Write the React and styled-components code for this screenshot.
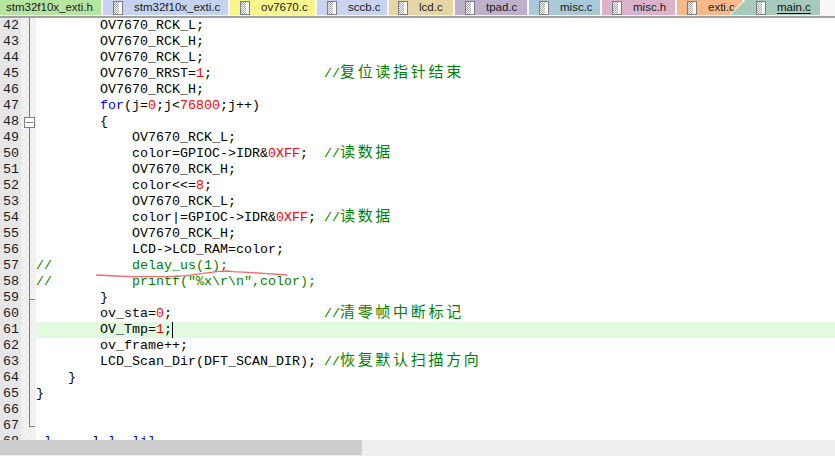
import React, { useId } from 'react';
import styled, { createGlobalStyle } from 'styled-components';

const GlobalStyle = createGlobalStyle`
  html, body {
    margin: 0;
    padding: 0;
    background: #fff;
  }
  body {
    overflow: hidden;
  }
`;

const Window = styled.div`
  width: 835px;
  height: 458px;
  box-sizing: border-box;
  padding-bottom: 2px;
  display: flex;
  flex-direction: column;
  background: #fff;
  overflow: hidden;
`;

const TabBar = styled.div`
  flex: none;
  height: 18px;
  box-sizing: border-box;
  display: flex;
  align-items: flex-start;
  gap: 2px;
  background: #f7f7f7;
  border-bottom: 2px solid #a2a2a2;
`;

const Tab = styled.div`
  flex: none;
  width: ${({ $w }) => $w}px;
  height: 15px;
  box-sizing: border-box;
  padding-left: ${({ $pad }) => $pad}px;
  display: flex;
  align-items: center;
  gap: 11px;
  background: ${({ $bg }) => $bg};
  color: #1b1b1b;
  font: 11.5px/15px "Liberation Sans", Arial, sans-serif;
  white-space: nowrap;
  overflow: hidden;
`;

const ActiveEdge = styled.div`
  flex: none;
  width: 91px;
  height: 15px;
  margin-left: -15px;
  box-sizing: border-box;
  padding-left: 1.5px;
  background: #fbfbfb;
  clip-path: polygon(15px 0, 100% 0, 100% 100%, 0 100%);
`;

const ActiveFace = styled.div`
  height: 15px;
  box-sizing: border-box;
  padding-left: 25.5px;
  display: flex;
  align-items: center;
  gap: 11px;
  background: #a7cabb;
  clip-path: polygon(15px 0, 100% 0, 100% 100%, 0 100%);
  color: #111;
  font: 11.5px/15px "Liberation Sans", Arial, sans-serif;
  white-space: nowrap;
`;

const ActiveLabel = styled.span`
  text-decoration: underline;
  text-decoration-thickness: 1px;
  text-underline-offset: 2px;
`;

const Editor = styled.div`
  flex: 1;
  min-height: 0;
  display: flex;
  overflow: hidden;
  font: 13.333px/16px "Liberation Mono", "Courier New", monospace;
`;

const Numbers = styled.div`
  flex: none;
  width: 21px;
  box-sizing: border-box;
  padding-right: 2px;
  background: #e6e6e6;
  color: #1c1c1c;
  text-align: right;
`;

const NumberCell = styled.div`
  height: 16px;
`;

const FoldMargin = styled.div`
  flex: none;
  width: 15px;
  background: repeating-conic-gradient(#e8e8e8 0 25%, #fdfdfd 0 50%) 0 0 / 2px 2px;

  svg {
    display: block;
  }
`;

const Code = styled.div`
  flex: 1;
  position: relative;
`;

const Line = styled.div`
  height: 16px;
  white-space: pre;
  color: #000;
  background: ${({ $current }) => ($current ? '#e0fbe0' : 'transparent')};
`;

const tokenColors = {
  p: '#000',
  n: '#ff0000',
  k: '#0000ff',
  c: '#008000',
};

const Token = styled.span`
  color: ${({ $kind }) => tokenColors[$kind]};
`;

const Cjk = styled.span`
  font-family: "Noto Sans CJK SC", sans-serif;
  font-size: 15px;
  line-height: 0;
  letter-spacing: 2.7px;
  color: #008000;
`;

const Caret = styled.span`
  display: inline-block;
  width: 1px;
  height: 16px;
  background: #000;
  vertical-align: top;
`;

const Scribble = styled.svg`
  position: absolute;
  left: 0;
  top: 0;
  pointer-events: none;
`;

const HScroll = styled.div`
  flex: none;
  height: 16px;
  background: #efefef;
`;

const Thumb = styled.div`
  width: 362px;
  height: 15px;
  background: #cdcdcd;
`;

const PageIcon = () => {
  const id = 'dots' + useId().replace(/[^a-zA-Z0-9]/g, '');
  return (
    <svg width="10" height="14" viewBox="0 0 10 14">
      <defs>
        <pattern id={id} width="2" height="2" patternUnits="userSpaceOnUse">
          <rect width="2" height="2" fill="#fff" />
          <rect width="1" height="1" fill="#a6a6a6" />
          <rect x="1" y="1" width="1" height="1" fill="#a6a6a6" />
        </pattern>
      </defs>
      <rect x="0.5" y="0.5" width="9" height="13" fill="#fff" stroke="#7d7d7d" />
      <rect x="1" y="1" width="5" height="12" fill={`url(#${id})`} />
    </svg>
  );
};

const tabs = [
  { name: 'stm32f10x_exti.h', w: 101, bg: '#b6e4a1', pad: 6, icon: false },
  { name: 'stm32f10x_exti.c', w: 125, bg: '#c6d3ef' },
  { name: 'ov7670.c', w: 85, bg: '#f6f68c' },
  { name: 'sccb.c', w: 70, bg: '#c9d2ee' },
  { name: 'lcd.c', w: 64, bg: '#e6d6a6', pad: 9 },
  { name: 'tpad.c', w: 72, bg: '#bcb0cb' },
  { name: 'misc.c', w: 71, bg: '#a9c9da' },
  { name: 'misc.h', w: 73, bg: '#dbb2ca' },
  { name: 'exti.c', w: 65, bg: '#f7b98a' },
];

const sp = (n) => ' '.repeat(n);

const lines = [
  [42, [['p', sp(8) + 'OV7670_RCK_L;']]],
  [43, [['p', sp(8) + 'OV7670_RCK_H;']]],
  [44, [['p', sp(8) + 'OV7670_RCK_L;']]],
  [45, [['p', sp(8) + 'OV7670_RRST='], ['n', '1'], ['p', ';' + sp(14)], ['c', '//'], ['z', '复位读指针结束']]],
  [46, [['p', sp(8) + 'OV7670_RCK_H;']]],
  [47, [['k', sp(8) + 'for'], ['p', '(j='], ['n', '0'], ['p', ';j<'], ['n', '76800'], ['p', ';j++)']]],
  [48, [['p', sp(8) + '{']]],
  [49, [['p', sp(12) + 'OV7670_RCK_L;']]],
  [50, [['p', sp(12) + 'color=GPIOC->IDR&'], ['n', '0XFF'], ['p', ';  '], ['c', '//'], ['z', '读数据']]],
  [51, [['p', sp(12) + 'OV7670_RCK_H;']]],
  [52, [['p', sp(12) + 'color<<='], ['n', '8'], ['p', ';']]],
  [53, [['p', sp(12) + 'OV7670_RCK_L;']]],
  [54, [['p', sp(12) + 'color|=GPIOC->IDR&'], ['n', '0XFF'], ['p', '; '], ['c', '//'], ['z', '读数据']]],
  [55, [['p', sp(12) + 'OV7670_RCK_H;']]],
  [56, [['p', sp(12) + 'LCD->LCD_RAM=color;']]],
  [57, [['c', '//' + sp(10) + 'delay_us(1);']]],
  [58, [['c', '//' + sp(10) + 'printf("%x\\r\\n",color);']]],
  [59, [['p', sp(8) + '}']]],
  [60, [['p', sp(8) + 'ov_sta='], ['n', '0'], ['p', ';' + sp(19)], ['c', '//'], ['z', '清零帧中断标记']]],
  [61, [['p', sp(8) + 'OV_Tmp='], ['n', '1'], ['p', ';']], true],
  [62, [['p', sp(8) + 'ov_frame++;']]],
  [63, [['p', sp(8) + 'LCD_Scan_Dir(DFT_SCAN_DIR); '], ['c', '//'], ['z', '恢复默认扫描方向']]],
  [64, [['p', sp(4) + '}']]],
  [65, [['p', '}']]],
  [66, []],
  [67, []],
  [68, [['p', ' '], ['k', 'l'], ['p', '     '], ['p', 'l '], ['k', 'l'], ['p', '  '], ['k', 'lil']]],
];

const FoldMarks = () => (
  <svg width="15" height="422" viewBox="0 0 15 422">
    <g stroke="#7f7f7f" fill="none" shapeRendering="crispEdges">
      <line x1="8.5" y1="0" x2="8.5" y2="99" />
      <rect x="3.5" y="99.5" width="10" height="10" fill="#fff" />
      <line x1="5" y1="104.5" x2="12" y2="104.5" />
      <line x1="8.5" y1="110" x2="8.5" y2="409" />
      <line x1="8" y1="281.5" x2="14" y2="281.5" />
      <line x1="8" y1="408.5" x2="14" y2="408.5" />
    </g>
  </svg>
);

export default function App() {
  return (
    <>
      <GlobalStyle />
      <Window>
        <TabBar>
          {tabs.map((t) => (
            <Tab key={t.name} $w={t.w} $bg={t.bg} $pad={t.pad ?? 10}>
              {t.icon !== false && <PageIcon />}
              <span>{t.name}</span>
            </Tab>
          ))}
          <ActiveEdge>
            <ActiveFace>
              <PageIcon />
              <ActiveLabel>main.c</ActiveLabel>
            </ActiveFace>
          </ActiveEdge>
        </TabBar>
        <Editor>
          <Numbers>
            {lines.map(([n]) => (
              <NumberCell key={n}>{n}</NumberCell>
            ))}
          </Numbers>
          <FoldMargin>
            <FoldMarks />
          </FoldMargin>
          <Code>
            {lines.map(([n, tokens, current]) => (
              <Line key={n} $current={current}>
                {tokens.map(([kind, text], i) =>
                  kind === 'z' ? (
                    <Cjk key={i}>{text}</Cjk>
                  ) : (
                    <Token key={i} $kind={kind}>{text}</Token>
                  )
                )}
                {current && <Caret />}
              </Line>
            ))}
            <Scribble width="300" height="300" viewBox="0 0 300 300">
              <polyline
                points="60.7,257 80,258 97,258.7 131,258.7 151,257.7 167,255.3 181,253.7 191,253 197,253.7 217,254.7 231,255.7 251,257"
                fill="none"
                stroke="#ee6b6b"
                strokeWidth="1.3"
                strokeLinejoin="round"
                strokeLinecap="round"
              />
            </Scribble>
          </Code>
        </Editor>
        <HScroll>
          <Thumb />
        </HScroll>
      </Window>
    </>
  );
}
